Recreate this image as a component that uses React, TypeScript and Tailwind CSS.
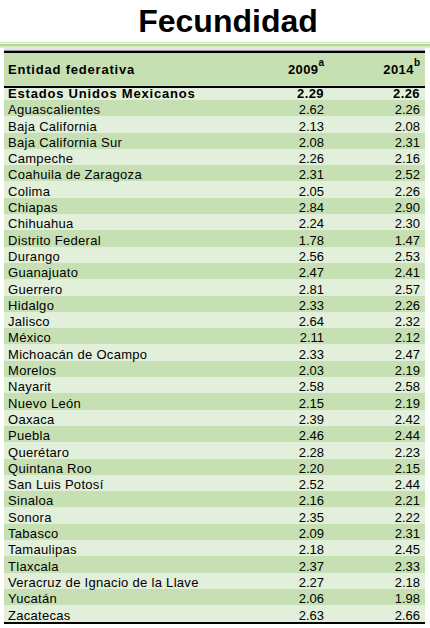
const rows: [string, string, string][] = [
  ["Aguascalientes", "2.62", "2.26"],
  ["Baja California", "2.13", "2.08"],
  ["Baja California Sur", "2.08", "2.31"],
  ["Campeche", "2.26", "2.16"],
  ["Coahuila de Zaragoza", "2.31", "2.52"],
  ["Colima", "2.05", "2.26"],
  ["Chiapas", "2.84", "2.90"],
  ["Chihuahua", "2.24", "2.30"],
  ["Distrito Federal", "1.78", "1.47"],
  ["Durango", "2.56", "2.53"],
  ["Guanajuato", "2.47", "2.41"],
  ["Guerrero", "2.81", "2.57"],
  ["Hidalgo", "2.33", "2.26"],
  ["Jalisco", "2.64", "2.32"],
  ["México", "2.11", "2.12"],
  ["Michoacán de Ocampo", "2.33", "2.47"],
  ["Morelos", "2.03", "2.19"],
  ["Nayarit", "2.58", "2.58"],
  ["Nuevo León", "2.15", "2.19"],
  ["Oaxaca", "2.39", "2.42"],
  ["Puebla", "2.46", "2.44"],
  ["Querétaro", "2.28", "2.23"],
  ["Quintana Roo", "2.20", "2.15"],
  ["San Luis Potosí", "2.52", "2.44"],
  ["Sinaloa", "2.16", "2.21"],
  ["Sonora", "2.35", "2.22"],
  ["Tabasco", "2.09", "2.31"],
  ["Tamaulipas", "2.18", "2.45"],
  ["Tlaxcala", "2.37", "2.33"],
  ["Veracruz de Ignacio de la Llave", "2.27", "2.18"],
  ["Yucatán", "2.06", "1.98"],
  ["Zacatecas", "2.63", "2.66"],
];

export default function App() {
  return (
    <div
      className="w-[430px] h-[628px] bg-white overflow-hidden text-black"
      style={{ fontFamily: '"Liberation Sans", Arial, sans-serif' }}
    >
      {/* title */}
      <div className="h-[42px] pt-[5px] pl-[26px] flex justify-center">
        <h1 className="text-[32px] leading-[32px] font-bold">Fecundidad</h1>
      </div>

      {/* green rule */}
      <div className="h-[1px] bg-[#cfe5b8]" />
      <div className="h-[1px] bg-[#f0f7ea]" />
      <div className="h-[2px] bg-[#b3d88e]" />
      <div className="h-[2px] bg-[#d9ecc6]" />

      <div className="ml-[4px] mr-[5px]">
        <div className="h-[2px] bg-[#e4e4e4]" />
        <div className="h-[1px] bg-[#9a9a9a]" />
        <div className="h-[2px] bg-black" />

        {/* header */}
        <div className="h-[32.5px] bg-[#c6e0b4] flex pl-[4px] pr-[5px] pt-[10px] text-[13px] leading-[13px] font-bold tracking-[0.8px]">
          <div className="flex-1">Entidad federativa</div>
          <div className="w-[80px] text-right tracking-[0.4px]">
            2009<span className="relative top-[-8px] text-[10px] leading-none tracking-normal">a</span>
          </div>
          <div className="w-[96px] text-right tracking-[0.4px]">
            2014<span className="relative top-[-8px] text-[10px] leading-none tracking-normal">b</span>
          </div>
        </div>
        <div className="h-[2px] bg-black" />

        <div className="h-[12.5px] bg-[#e2efda] flex items-end pl-[4px] pr-[5px] text-[13px] leading-[12px] font-bold">
          <div className="flex-1 tracking-[0.8px] whitespace-nowrap">Estados Unidos Mexicanos</div>
          <div className="w-[80px] text-right tracking-[0.4px]">2.29</div>
          <div className="w-[96px] text-right tracking-[0.4px]">2.26</div>
        </div>

        {rows.map(([name, a, b], i) => (
          <div
            key={name}
            className={`h-[16.3px] flex items-end pl-[4px] pr-[5px] text-[13px] leading-[12px] ${
              i % 2 === 0 ? "bg-[#c6e0b4]" : "bg-[#e2efda]"
            }`}
          >
            <div className="flex-1 tracking-[0.3px] whitespace-nowrap">{name}</div>
            <div className="w-[80px] text-right">{a}</div>
            <div className="w-[96px] text-right">{b}</div>
          </div>
        ))}
        <div className="h-[2.5px] bg-black" />
      </div>
    </div>
  );
}
